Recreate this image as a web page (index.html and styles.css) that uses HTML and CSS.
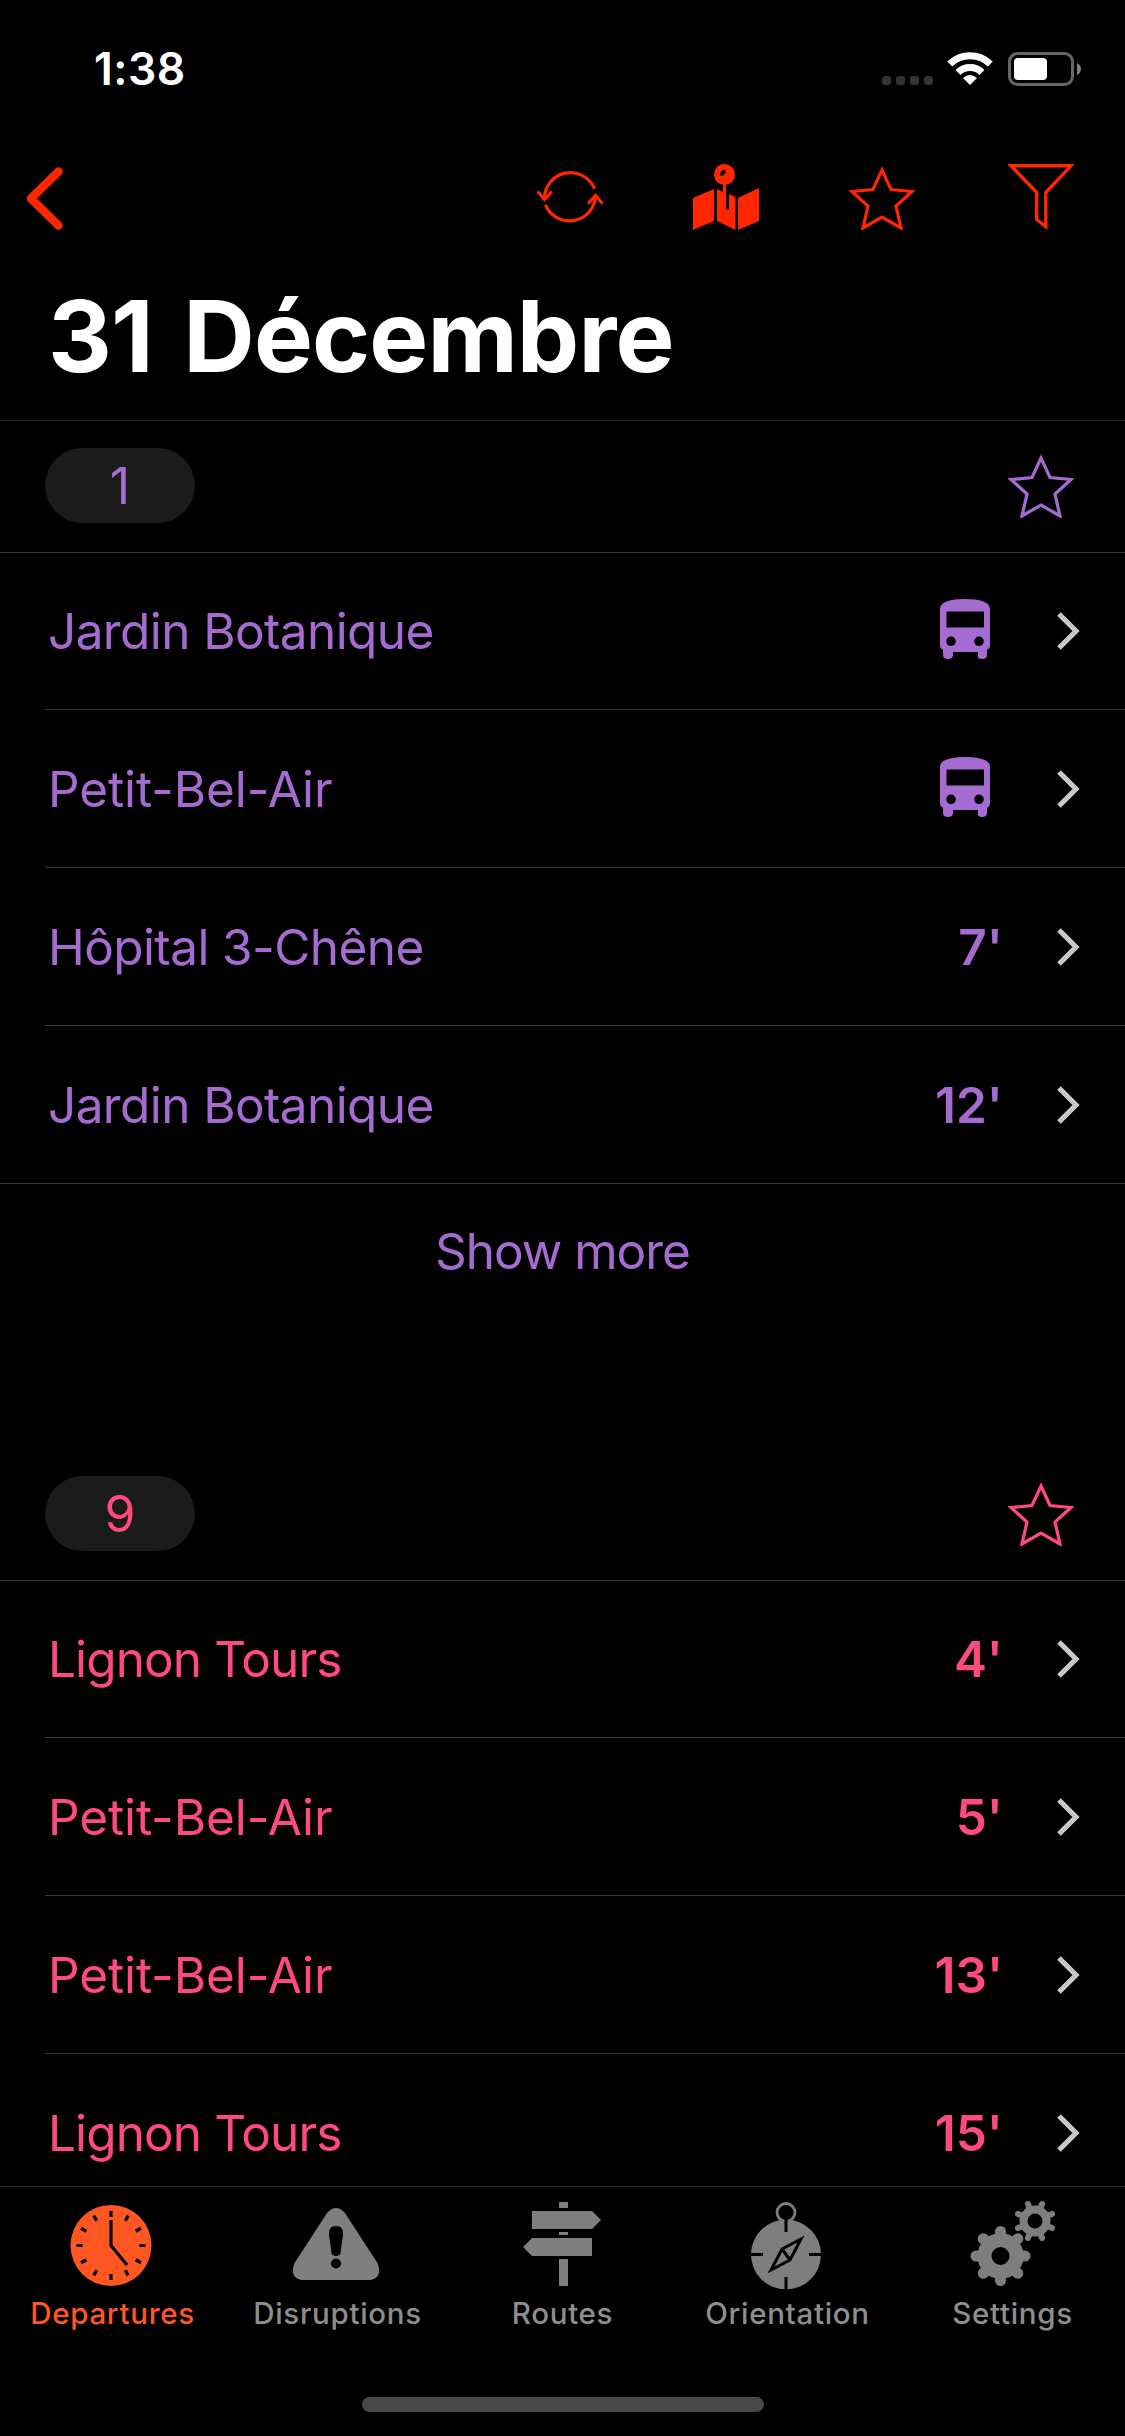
FILE: index.html
```html
<!DOCTYPE html>
<html lang="en">
<head>
<meta charset="utf-8">
<title>31 Décembre</title>
<link rel="stylesheet" href="styles.css">
</head>
<body>
<svg class="defs" aria-hidden="true">
  <symbol id="star" viewBox="0 0 66 66"><path d="M33 6L42 25.500L63 27.500L47 42L52 64L33 53L14 64L19 42L3 27.500L24 25.500Z" fill="none" stroke="currentColor" stroke-width="3.200"/></symbol>
  <symbol id="bus" viewBox="0 0 50 60"><path fill="currentColor" fill-rule="evenodd" d="M0 10C0 3 10 0 25 0S50 3 50 10V47Q50 49 47 51V56Q47 60 42 60T38 56V53H13V56Q13 60 8 60T3 56V51Q0 49 0 47ZM6.500 12.500V28.500H44V12.500ZM11 37.500A4.800 4.800 0 1 0 11 47.100A4.800 4.800 0 1 0 11 37.500ZM39 37.500A4.800 4.800 0 1 0 39 47.100A4.800 4.800 0 1 0 39 37.500Z"/></symbol>
  <symbol id="chev" viewBox="0 0 24 40"><path d="M2 3L19 20L2 37" fill="none" stroke="#c7c7cc" stroke-width="5.200"/></symbol>
</svg>
<div class="screen">
  <header class="header">
    <div class="status">
      <span class="time">1:38</span>
      <svg class="signal" viewBox="0 0 52 9" fill="#333"><rect width="9" height="9" rx="3"/><rect x="14" width="9" height="9" rx="3"/><rect x="28" width="9" height="9" rx="3"/><rect x="42" width="9" height="9" rx="3"/></svg>
      <svg class="wifi" viewBox="0 0 46 33"><g fill="none" stroke="#fff" stroke-width="7"><path d="M2.700 12A29 29 0 0 1 43.300 12"/><path d="M11 20.500A17 17 0 0 1 35 20.500"/></g><path d="M23 33L16 26Q23 20 30 26Z" fill="#fff"/></svg>
      <svg class="battery" viewBox="0 0 74 34"><rect x="1.500" y="1.500" width="63" height="31" rx="8" fill="none" stroke="#666" stroke-width="3"/><rect x="6" y="6" width="33" height="22" rx="4" fill="#fff"/><path d="M69 11Q73 13 73 17T69 23Z" fill="#808080"/></svg>
    </div>
    <nav class="tools">
      <svg class="back" viewBox="0 0 38 64"><path d="M33.500 4.500L6 31.500L33.500 58.500" fill="none" stroke="currentColor" stroke-width="8.500" stroke-linecap="round" stroke-linejoin="round"/></svg>
      <svg class="tool" viewBox="0 0 66 66" fill="none" stroke="currentColor" stroke-width="3.200" stroke-linecap="round"><path d="M57 23.500A26 26 0 0 0 7.500 34M1.500 28.500L7.500 35.500L14 28.500M9 42A26 26 0 0 0 58.500 32M52 38.500L58.500 31.500L64.500 38.500"/></svg>
      <svg class="tool" viewBox="0 0 66 66" fill="currentColor"><path d="M0 34L21 25V57L0 66ZM45 34L66 24V57L45 66Z"/><path d="M24 25L30 28V18H33V45.500H36V30L42.500 33V66L24 57Z"/><circle cx="31.500" cy="10.500" r="10.500"/><path d="M28.700 11.500Q28.700 7.800 32.500 7.800" stroke="#000" stroke-width="3.600" fill="none"/></svg>
      <svg class="tool"><use href="#star"/></svg>
      <svg class="tool last" viewBox="0 0 66 66" fill="none" stroke="currentColor" stroke-width="3.400"><path d="M3 1.800H63L37.800 28.500V62.500L28.700 55.500V28.500Z"/></svg>
    </nav>
    <h1 class="title">31 Décembre</h1>
  </header>
  <main class="list">
    <section class="line purple">
      <div class="line-head"><span class="badge">1</span><svg class="fav"><use href="#star"/></svg></div>
      <ul class="rows">
        <li class="row"><span class="dest">Jardin Botanique</span><svg class="bus"><use href="#bus"/></svg><svg class="chev"><use href="#chev"/></svg></li>
        <li class="row"><span class="dest wide">Petit-Bel-Air</span><svg class="bus"><use href="#bus"/></svg><svg class="chev"><use href="#chev"/></svg></li>
        <li class="row"><span class="dest">Hôpital 3-Chêne</span><b class="min">7'</b><svg class="chev"><use href="#chev"/></svg></li>
        <li class="row end"><span class="dest">Jardin Botanique</span><b class="min">12'</b><svg class="chev"><use href="#chev"/></svg></li>
      </ul>
      <div class="more">Show more</div>
    </section>
    <section class="line pink">
      <div class="line-head"><span class="badge">9</span><svg class="fav"><use href="#star"/></svg></div>
      <ul class="rows">
        <li class="row"><span class="dest tight">Lignon Tours</span><b class="min">4'</b><svg class="chev"><use href="#chev"/></svg></li>
        <li class="row"><span class="dest wide">Petit-Bel-Air</span><b class="min">5'</b><svg class="chev"><use href="#chev"/></svg></li>
        <li class="row"><span class="dest wide">Petit-Bel-Air</span><b class="min">13'</b><svg class="chev"><use href="#chev"/></svg></li>
        <li class="row"><span class="dest tight">Lignon Tours</span><b class="min">15'</b><svg class="chev"><use href="#chev"/></svg></li>
      </ul>
    </section>
  </main>
  <footer class="tabbar">
    <div class="tabs">
      <div class="tab active"><svg class="icon" viewBox="0 0 90 90"><circle cx="45" cy="46.500" r="40.500" fill="currentColor"/><g stroke="#000" stroke-width="3.200" fill="none"><path d="M45 21V46.500L61 66"/><path id="tick" d="M45 12V18M45 75V81M10.500 46.500H16.500M73.500 46.500H79.500"/><use href="#tick" transform="rotate(30 45 46.500)"/><use href="#tick" transform="rotate(60 45 46.500)"/></g></svg><span>Departures</span></div>
      <div class="tab"><svg class="icon" viewBox="0 0 90 90"><path fill="currentColor" d="M36 14Q45 4 54 14L86.500 64Q92 78 80 81H10Q-2 78 3.500 64Z"/><path d="M45 27Q53 27 52 36L49.500 54Q48.500 57 45 57T40.500 54L38 36Q37 27 45 27Z"/><circle cx="45" cy="64.500" r="5"/></svg><span>Disruptions</span></div>
      <div class="tab"><svg class="icon routes" viewBox="0 0 90 90" fill="currentColor"><path d="M41 3H50V9H41ZM14 12H74L83 21L74 30H14ZM41 33H50V36H41ZM14 39H74V57H14L5 48ZM41 60H50V87H41Z"/></svg><span>Routes</span></div>
      <div class="tab"><svg class="icon" viewBox="0 0 90 90"><circle cx="45" cy="55.500" r="35" fill="currentColor"/><circle cx="45" cy="13.500" r="9" fill="#000" stroke="currentColor" stroke-width="2.800"/><g fill="none" stroke="#000" stroke-width="3"><path d="M45 16V33M45 78V91M10 55.500H22M68 55.500H80M60 40L41 50L30 71L49 61ZM41 50L49 61"/></g></svg><span>Orientation</span></div>
      <div class="tab"><svg class="icon" viewBox="0 0 90 90"><g fill="none" stroke="currentColor"><circle cx="34.500" cy="57" r="16" stroke-width="14"/><path id="cog" d="M34.500 32.500V39M34.500 75V81.500M10 57H16M53 57H59" stroke-width="11" stroke-linecap="round"/><use href="#cog" transform="rotate(45 34.500 57)"/><circle cx="69" cy="22" r="11.500" stroke-width="8"/><path id="cog-small" d="M74.700 8.200L76.100 5M63.300 8.200L61.900 5M63.300 35.800L61.900 39M74.700 35.800L76.100 39M82.800 16.300L86 14.900M82.800 27.700L86 29.100M55.200 16.300L52 14.900M55.200 27.700L52 29.100" stroke-width="6" stroke-linecap="round"/></g></svg><span>Settings</span></div>
    </div>
    <div class="home"></div>
  </footer>
</div>
</body>
</html>
```
FILE: styles.css
```css
* { box-sizing: border-box; }
body { margin: 0; background: #000; font-family: Inter, "Liberation Sans", sans-serif; }
.defs { position: absolute; width: 0; height: 0; }
.screen { width: 1125px; height: 2436px; display: flex; flex-direction: column; overflow: hidden; background: #000; }
.header { flex: none; height: 421px; border-bottom: 1px solid #222; }
.status { display: flex; height: 132px; padding: 0 43px 0 94px; color: #fff; }
.time { flex: 1; font-size: 44.500px; font-weight: 600; line-height: 54px; padding-top: 42px; letter-spacing: .5px; }
.signal { width: 52px; height: 9px; margin: 76px 13px 0 0; }
.wifi { width: 46px; height: 33px; margin: 52px 15px 0 0; }
.battery { width: 74px; height: 34px; margin-top: 52px; }
.tools { display: flex; height: 132px; padding: 32px 51px 0 25px; color: #ff2600; }
.back { width: 38px; height: 64px; margin: 3px auto 0 0; }
.tool { width: 66px; height: 66px; margin-left: 90px; }
.last { margin-left: 93px; }
.title { margin: 0; padding: 12px 0 0 48px; color: #fff; font-size: 99px; font-weight: 700; line-height: 120px; letter-spacing: -.9px; word-spacing: 8px; }
.list { flex: 1; min-height: 0; overflow: hidden; }
.purple { color: #a66bd0; height: 1028px; }
.pink { color: #ff4a80; }
.line-head { display: flex; height: 132px; padding: 27px 51px 0 45px; justify-content: space-between; border-bottom: 1px solid #3b3b3d; }
.badge { width: 150px; height: 75px; border-radius: 38px; background: #1b1b1b; font-size: 50px; line-height: 76px; text-align: center; }
.fav { width: 66px; height: 66px; margin-top: 4px; }
.rows { list-style: none; margin: 0; padding: 0 0 0 45px; }
.row { display: flex; align-items: center; height: 158px; padding: 1px 44px 0 3px; border-bottom: 1px solid #3b3b3d; }
.row:first-child { height: 157px; padding-top: 0; }
.row.end { margin-left: -45px; padding-left: 48px; }
.dest { flex: 1; font-size: 49.500px; letter-spacing: -.6px; }
.dest.wide { letter-spacing: -.1px; }
.dest.tight { letter-spacing: -.9px; }
.min { font-size: 49.500px; font-weight: 600; margin-right: 54px; }
.bus { width: 50px; height: 60px; margin: -4px 67px 0 0; }
.chev { width: 24px; height: 40px; }
.more { padding-top: 37px; font-size: 49.500px; line-height: 60px; text-align: center; letter-spacing: -1px; }
.tabbar { flex: none; height: 250px; background: #000; border-top: 1px solid #262626; }
.tabs { display: flex; gap: 6px; height: 210px; padding: 12px 3px 0; }
.tab { flex: 1; display: flex; flex-direction: column; align-items: center; color: #8e8e8e; font-size: 29.500px; font-weight: 500; line-height: 36px; letter-spacing: .7px; }
.tab .icon { width: 90px; height: 90px; margin: 0 4px 6px 0; color: #7e7e7e; overflow: visible; }
.tab .routes { margin-right: 0; }
.tab.active, .tab.active .icon { color: #ff5722; }
.home { width: 402px; height: 15px; margin: 0 auto; border-radius: 8px; background: #484848; }
```
